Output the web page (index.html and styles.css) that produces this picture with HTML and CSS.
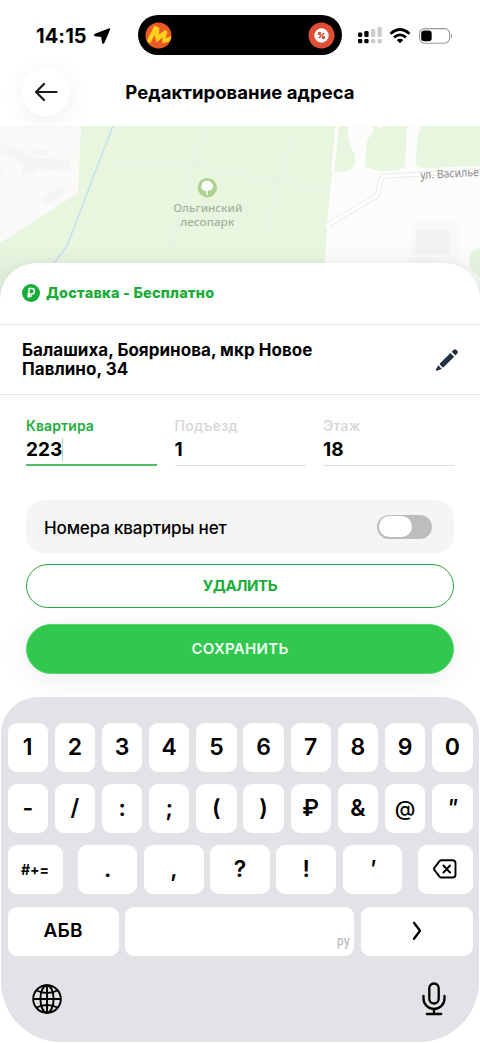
FILE: index.html
```
<!DOCTYPE html>
<html lang="ru">
<head>
<meta charset="utf-8">
<title>Редактирование адреса</title>
<link rel="stylesheet" href="styles.css">
</head>
<body>
<div class="screen">
  <header class="status">
    <div class="clock">14:15
      <svg class="loc" viewBox="0 0 17 16"><path d="M15.500 1 9.600 14.600q-.5.8-.8-.1L7.900 8.300 1.200 7.400q-.9-.3 0-.9Z" fill="#000" stroke="#000" stroke-width="1.600" stroke-linejoin="round"/></svg>
    </div>
    <div class="island">
      <svg class="app" viewBox="0 0 27 27"><defs><clipPath id="disc"><circle cx="13.5" cy="13.5" r="13"/></clipPath></defs><circle cx="13.5" cy="13.5" r="13" fill="#e95a26"/><path d="M1.500 19.500 9.500 3.500 14.500 6 14 12.500 20 8 22.500 9.500 20.500 16.500 26.500 14 25 19 17.500 21.500 17.500 15.500 11.500 20.500 9.500 13 5.500 21Z" fill="#ffd01b" clip-path="url(#disc)"/></svg>
      <svg class="app" viewBox="0 0 27 27"><circle cx="13.5" cy="13.5" r="13" fill="#df4e35"/><circle cx="13.500" cy="13.500" r="7.200" fill="#fff"/><g fill="none" stroke="#d94a35" stroke-width="1.500"><path d="m11 16 5-5" /><circle cx="11.500" cy="11.500" r="1"/><circle cx="15.500" cy="15.500" r="1"/></g></svg>
    </div>
    <svg class="signal" viewBox="0 0 24 17"><g fill="#000"><rect y="5.500" width="4.300" height="4.500" rx="1.200"/><rect x="6.300" y="4" width="4.300" height="6" rx="1.200"/><rect y="12" width="4.300" height="4.300" rx="1.200"/><rect x="6.300" y="12" width="4.300" height="4.300" rx="1.200"/></g><g fill="#ccc"><rect x="13" y="2" width="4.300" height="8" rx="1.200"/><rect x="19.500" width="4.300" height="10" rx="1.200"/><rect x="13" y="12" width="4.300" height="4.300" rx="1.200"/><rect x="19.500" y="12" width="4.300" height="4.300" rx="1.200"/></g></svg>
    <svg class="wifi" viewBox="0 0 22 16"><g fill="none" stroke="#000" stroke-width="2.700"><path d="M1.500 5.700Q11-2.700 20.500 5.700"/><path d="M5 9.400q6-4.900 12 0"/></g><path d="M7.700 12q3.300-2.600 6.600 0L11 15.300Z"/></svg>
    <svg class="battery" viewBox="0 0 35 16"><rect x=".6" y=".6" width="30" height="14.600" rx="5" fill="none" stroke="#999" stroke-width="1.100"/><rect x="2.200" y="2.500" width="10.500" height="10.800" rx="3.200"/><path d="M32 5.500q2.200 2.500 0 5Z" fill="#999"/></svg>
  </header>

  <div class="topbar">
    <button class="back" aria-label="Назад"><svg viewBox="0 0 24 20"><path d="M22.500 10H2.200M10 2 2 10l8 8" fill="none" stroke="#1a1a1a" stroke-width="2.200" stroke-linecap="round" stroke-linejoin="round"/></svg></button>
    <h1>Редактирование адреса</h1>
  </div>

  <svg class="map" viewBox="0 126 480 180">
    <defs>
      <linearGradient id="shade" x1="0" y1="0" x2="0" y2="1"><stop offset="0" stop-opacity="0"/><stop offset="1" stop-opacity=".06"/></linearGradient>
    </defs>
    <path fill="#fcfdfb" d="M0 126h480v180H0z"/>
    <path fill="#fafaf9" d="M0 126h81l-3 67-78 50z"/>
    <path fill="#e8f5df" d="M81 126h254l-2 38-5 50-6 92H0v-63l78-50z"/>
    <g fill="#e8f5df">
      <path d="M338 126h10q-2 14 7 29v10q-5 7-13 7h-8z"/>
      <path d="M368 126h4l2 5-7 9-2 26q9 6 22 5 15 0 18-5l2-40h-21l-6 2-2-2z"/>
      <path d="M421 126h59v40l-55 2q-12-1-9-7l1-20z"/>
      <path d="M480 248q-9 2-11 10l1 10 10 10z"/>
    </g>
    <g fill="#f5f6f4">
      <path d="m1 144 12 2 12 9 16 3 30 2v10l-13 1-22-3-6 7h-8l2-11-24-13z"/>
      <path d="m40 199 20-12q8 1 7 6l-21 13z"/>
      <path d="m0 164 4 5-4 8zM34 149l14 1v6l-14-2z"/>
    </g>
    <path fill="#f9f9f8" d="M411 219h47v44h-50l3-14z"/>
    <path fill="#f2f2f2" d="M416 230h34v24h-34z"/>
    <path fill="#fcfdfb" d="M336 126h3l-5 46h-3z"/>
    <g fill="none" stroke="#e3f1e6">
      <path d="m110 160 85 5 49 10 80 14M204 133l-12 37-22 78M295 134l-18 50-10 50"/>
    </g>
    <path d="m328 225 47-28q4-2 4-9 1-12 7-12l94-5" fill="none" stroke="#e9e9e9" stroke-width="5"/>
    <path d="m326 226 49-29q4-2 4-9 1-12 7-12l94-5" fill="none" stroke="#fff" stroke-width="3.200"/>
    <path d="m113 126-17 44-29 76-20 26" fill="none" stroke="#c8e2ed" stroke-width="1.600"/>
    <circle cx="207.300" cy="187.700" r="9.700" fill="#afd293"/>
    <path d="M207 195v-6" stroke="#fff" stroke-width="1.500"/>
    <path d="M203 190q-3-2-1-5 0-4 4-4 4-1 5 2 3 1 2 4-1 4-4 3-3 2-6 0" fill="#fff"/>
    <g class="place" text-anchor="middle"><text x="207.800" y="212.200" textLength="69" lengthAdjust="spacingAndGlyphs">Ольгинский</text><text x="207.300" y="225.800" textLength="54" lengthAdjust="spacingAndGlyphs">лесопарк</text></g>
    <text class="street" x="420.500" y="179" textLength="58.500" lengthAdjust="spacingAndGlyphs" transform="rotate(-3 420.500 179)">ул. Василье</text>
    <path fill="url(#shade)" d="M0 242h480v64H0z"/>
  </svg>

  <main class="sheet">
    <div class="delivery">
      <svg viewBox="0 0 18 18"><circle cx="9" cy="9" r="9" fill="#18ad36"/><path d="M7 14V4.500h2.700a2.700 2.700 0 0 1 0 5.400H5.300M5.300 12h4.800" fill="none" stroke="#fff" stroke-width="1.500"/></svg>
      <span>Доставка - Бесплатно</span>
    </div>
    <div class="address">
      <p>Балашиха, Бояринова, мкр Новое<br>Павлино, 34</p>
      <svg class="pencil" viewBox="0 0 24 24"><g fill="#223041"><path d="m4.300 16 11.200-11 3.700 3.700-11.200 11z"/><path d="m16.700 3.800 2-2q1.400-1.200 2.600 0l1 1q1.200 1.400 0 2.600l-1.900 2z"/><path d="m3.200 17.300 3.700 3.700L1.600 22.800q-1 .1-.8-1z"/></g></svg>
    </div>
    <div class="fields">
      <label class="field active"><span>Квартира</span><b>223</b></label>
      <label class="field"><span>Подъезд</span><b>1</b></label>
      <label class="field"><span>Этаж</span><b>18</b></label>
    </div>
    <div class="no-flat"><span>Номера квартиры нет</span><i class="switch"></i></div>
    <button class="btn outline"><span>УДАЛИТЬ</span></button>
    <button class="btn solid"><span>СОХРАНИТЬ</span></button>
  </main>

  <section class="keyboard">
    <div class="row ten">
      <kbd>1</kbd><kbd>2</kbd><kbd>3</kbd><kbd>4</kbd><kbd>5</kbd><kbd>6</kbd><kbd>7</kbd><kbd>8</kbd><kbd>9</kbd><kbd>0</kbd>
    </div>
    <div class="row ten">
      <kbd>-</kbd><kbd>/</kbd><kbd>:</kbd><kbd>;</kbd><kbd>(</kbd><kbd>)</kbd><kbd>₽</kbd><kbd>&amp;</kbd><kbd class="at">@</kbd><kbd class="quote">"</kbd>
    </div>
    <div class="row marks">
      <kbd class="small">#+=</kbd>
      <div class="middle"><kbd>.</kbd><kbd>,</kbd><kbd>?</kbd><kbd>!</kbd><kbd class="quote">'</kbd></div>
      <kbd><svg class="erase" viewBox="0 0 24 20"><path d="M8.500 1.200h11q3 0 3 3v11.300q0 3-3 3h-11q-1.200 0-2-.9l-5-6.400q-.9-1.300 0-2.600l5-6.500q.8-.9 2-.9ZM10.500 6.500l6.500 7M17 6.500l-6.500 7" fill="none" stroke="#000" stroke-width="1.900" stroke-linecap="round" stroke-linejoin="round"/></svg></kbd>
    </div>
    <div class="row bottom">
      <kbd class="abc">АБВ</kbd><kbd class="space"><span>РУ</span></kbd><kbd><svg class="next" viewBox="0 0 10 20"><path d="m2 1.800 6 8-6 8" fill="none" stroke="#000" stroke-width="2.300" stroke-linecap="round" stroke-linejoin="round"/></svg></kbd>
    </div>
    <div class="tools">
      <svg class="globe" viewBox="0 0 30 30"><g fill="none" stroke="#000" stroke-width="1.900"><circle cx="15" cy="15" r="13.800"/><ellipse cx="15" cy="15" rx="6.600" ry="13.800"/><path d="M15 1v28M1 15h28M4.500 6.500q10.500 5 21 0M4.500 23.500q10.500-5 21 0"/></g></svg>
      <svg class="mic" viewBox="0 0 24 34"><g fill="none" stroke="#000" stroke-width="2.300" stroke-linecap="round"><rect x="7.300" y="1.500" width="9.400" height="20" rx="4.700"/><path d="M1.500 14v2.500a10.500 10.500 0 0 0 21 0V14M12 27v5M4.800 32h14.400"/></g></svg>
    </div>
  </section>
</div>
</body>
</html>
```
FILE: styles.css
```
* { box-sizing: border-box; }
body { margin: 0; background: #fff; font-family: Inter, "Liberation Sans", sans-serif; color: #000; }
button { font: inherit; padding: 0; }
svg { display: block; flex: none; }
.screen { width: 480px; height: 1043px; overflow: hidden; display: flex; flex-direction: column; background: #fff; }

.status { height: 71px; display: flex; align-items: center; flex: none; }
.clock { width: 138px; padding-left: 36px; display: flex; align-items: center; gap: 7px; font-size: 20px; font-weight: 700; letter-spacing: .1px; }
.loc { width: 17px; height: 16px; }
.island { width: 204px; height: 40px; margin-top: -1px; border-radius: 20px; background: #000; display: flex; align-items: center; justify-content: space-between; padding: 0 7px; }
.app { width: 27px; height: 27px; }
.signal { width: 24px; height: 17px; margin-left: 16px; }
.wifi { width: 22px; height: 16px; margin-left: 7px; }
.battery { width: 35px; height: 16px; margin-left: 8px; }

.topbar { height: 55px; flex: none; display: flex; align-items: flex-start; padding: 0 22px; }
.back { width: 48px; height: 48px; margin-top: -3px; border: 0; border-radius: 50%; background: #fff; box-shadow: 0 4px 24px rgba(0,0,0,.07); display: grid; place-items: center; position: relative; z-index: 1; }
.back svg { width: 24px; height: 20px; }
h1 { margin: 10px 48px 0 0; flex: 1; text-align: center; font-size: 18.500px; line-height: 22px; font-weight: 750; letter-spacing: .05px; white-space: nowrap; }

.map { width: 480px; height: 180px; }
.place { font: 500 11.500px "Noto Sans", sans-serif; fill: #a3b19c; }
.street { font: 11.500px "Noto Sans", sans-serif; fill: #8c8c8c; }

.sheet { height: 480px; margin-top: -43px; flex: none; position: relative; border-radius: 36px 36px 0 0; background: #fff; box-shadow: 0 0 12px rgba(0,0,0,.06); }
.delivery { height: 62px; padding: 0 22px 2px; display: flex; align-items: center; gap: 6px; border-bottom: 1px solid #e8e8e8; color: #18ad36; font-size: 14.500px; font-weight: 850; letter-spacing: .2px; }
.delivery svg { width: 18px; height: 18px; }
.address { height: 70px; padding: 1px 21px 0 22px; display: flex; align-items: center; justify-content: space-between; border-bottom: 1px solid #e8e8e8; }
.address p { margin: 0; font-size: 17px; line-height: 19px; font-weight: 700; letter-spacing: .03px; white-space: nowrap; }
.pencil { width: 24px; height: 24px; }
.fields { display: grid; grid-template-columns: repeat(3, 131px); gap: 17.500px; padding: 22px 26px 0; }
.field { height: 49px; border-bottom: 1px solid #dedede; display: flex; flex-direction: column; align-items: flex-start; }
.field span { font-size: 14px; line-height: 18px; font-weight: 500; letter-spacing: .3px; color: #d6d6d6; }
.field b { font-size: 19px; line-height: 23px; margin-top: 3px; font-weight: 700; letter-spacing: 0; }
.field.active { border-bottom: 2px solid #4fbd65; }
.field.active span { color: #22ae3d; font-weight: 600; letter-spacing: .1px; }
.field.active b { border-right: 1px solid #a2dfae; }
.no-flat { margin: 34px 26px 0; height: 53px; border-radius: 18px; background: #f5f5f5; padding: 0 22px 0 18px; display: flex; align-items: center; justify-content: space-between; font-size: 17px; font-weight: 500; letter-spacing: -.15px; }
.no-flat span { padding-top: 2px; }
.switch { width: 55px; height: 24px; border-radius: 12px; background: #bdbdbd; padding: 1.500px; }
.switch::before { content: ""; display: block; width: 33px; height: 21px; border-radius: 11px; background: #fff; }
.btn { display: block; width: 428px; margin: 0 26px; padding-bottom: 2px; border-radius: 26px; font-size: 15px; font-weight: 600; }
.outline { height: 44px; margin-top: 11px; background: #fff; border: 1px solid #2ba542; color: #18ad36; font-weight: 700; letter-spacing: -.4px; }
.solid { height: 50px; margin-top: 16px; background: #32c84f; border: 1px solid #52d66b; color: #effff2; letter-spacing: .3px; box-shadow: 0 5px 30px rgba(0,0,0,.08); }

.keyboard { height: 345px; margin: -46px 1px 0; padding: 26px 6.500px 0; flex: none; position: relative; background: #e2e3e6; border-radius: 37px 37px 60px 60px; }
.row { height: 49px; margin-bottom: 12.200px; display: grid; gap: 6.700px; }
.ten { grid-template-columns: repeat(10, 1fr); }
.marks { grid-template-columns: 55px 1fr 55px; gap: 15.500px; }
.middle { display: grid; grid-template-columns: repeat(5, 1fr); gap: 6.700px; }
.bottom { grid-template-columns: 111px 1fr 111.500px; }
kbd { height: 49px; background: #fff; border-radius: 9px; display: flex; align-items: center; justify-content: center; font: 600 23px Inter, "Liberation Sans", sans-serif; padding-bottom: 1px; }
.at { font-weight: 500; font-size: 21px; }
.quote { font-weight: 500; font-style: italic; }
.small { font-size: 14px; font-weight: 700; }
.abc { font-size: 19px; letter-spacing: .2px; }
.space { align-items: flex-end; justify-content: flex-end; padding: 0 5px 4px 0; color: #bcbcbc; font: 500 14px Roboto, sans-serif; }
.space span { transform: scaleX(.72); transform-origin: right; }
.erase { width: 24px; height: 20px; }
.next { width: 10px; height: 20px; }
.tools { display: flex; justify-content: space-between; padding: 14px 27px 0 24px; }
.globe { width: 30px; height: 30px; margin-top: 2px; }
.mic { width: 24px; height: 34px; }
```
